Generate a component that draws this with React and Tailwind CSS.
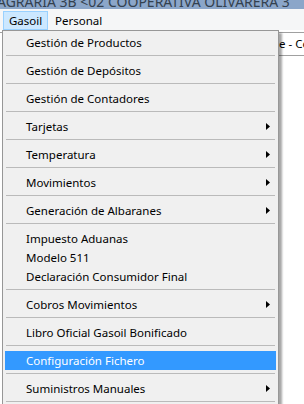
import { Fragment } from 'react'

const groups = [
  [{ label: 'Gestión de Productos' }],
  [{ label: 'Gestión de Depósitos' }],
  [{ label: 'Gestión de Contadores' }],
  [{ label: 'Tarjetas', sub: true }],
  [{ label: 'Temperatura', sub: true }],
  [{ label: 'Movimientos', sub: true }],
  [{ label: 'Generación de Albaranes', sub: true }],
  [
    { label: 'Impuesto Aduanas' },
    { label: 'Modelo 511' },
    { label: 'Declaración Consumidor Final' }
  ],
  [{ label: 'Cobros Movimientos', sub: true }],
  [{ label: 'Libro Oficial Gasoil Bonificado' }],
  [{ label: 'Configuración Fichero', active: true }],
  [{ label: 'Suministros Manuales', sub: true }]
]

const Arrow = () => (
  <svg width="4" height="7" viewBox="0 0 4 7" className="shrink-0">
    <path d="M0 0 L4 3.5 L0 7 Z" fill="#000" />
  </svg>
)

const MenuItem = ({ item }) => (
  <div
    className={
      item.active
        ? 'h-[19px] flex items-center pl-[21px] pr-[6px] bg-[#3399ff] text-white'
        : 'h-[19px] flex items-center pl-[21px] pr-[6px] text-black'
    }
  >
    <span className="flex-1 whitespace-nowrap">{item.label}</span>
    {item.sub && <Arrow />}
  </div>
)

const Separator = () => (
  <div className="h-[9px] pt-[3px] px-[1px]">
    <div className="h-px bg-[#bababa]"></div>
  </div>
)

export default function App() {
  return (
    <div className="relative w-[304px] h-[404px] overflow-hidden bg-white font-['Noto_Sans',sans-serif] text-[11.5px]">
      {/* Title bar */}
      <div className="h-[9px] overflow-hidden bg-[#8ba6c9] text-[#33414f]">
        <div className="-mt-[5px] -ml-[3px] text-[14px] leading-none whitespace-nowrap">
          AGRARIA 3B &lt;02 COOPERATIVA OLIVARERA 3
        </div>
      </div>

      {/* Menu bar */}
      <div className="h-[21px] bg-[#f5f6f7] flex items-start pt-[2px] pl-[3px]">
        <div className="h-[19px] w-[45px] flex items-center justify-center bg-[#cce8ff] border border-[#99d1ff]">
          Gasoil
        </div>
        <div className="h-[19px] pl-[7px] flex items-center">Personal</div>
      </div>

      {/* Window content behind the menu */}
      <div className="flex h-full">
        <div className="w-[2px] bg-[#dcdcdc]"></div>
        <div className="flex-1 mt-[2px] border-t border-[#a0a0a0]">
          <div className="h-[22px] flex items-center pl-[279px] whitespace-nowrap overflow-hidden text-black">
            e - Cooperativa
          </div>
          <div className="border-t border-[#a0a0a0] ml-[276px]"></div>
        </div>
      </div>

      {/* Dropdown */}
      <div className="absolute left-[2px] top-[30px] w-[277px] border border-[#979797] bg-[#f0f0f0] p-[2px] shadow-[3px_3px_2px_rgba(0,0,0,0.35)]">
        {groups.map((group, i) => (
          <Fragment key={i}>
            {i > 0 && <Separator />}
            {group.map((item) => (
              <MenuItem key={item.label} item={item} />
            ))}
          </Fragment>
        ))}
        <Separator />
      </div>
    </div>
  )
}
